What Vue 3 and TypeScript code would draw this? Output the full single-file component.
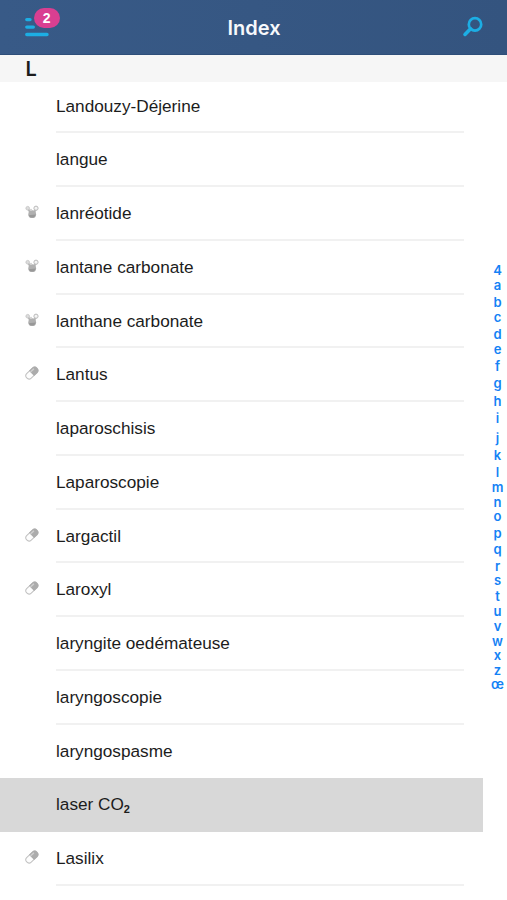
<script setup lang="ts">
type Kind = 'molecule' | 'pill' | null

interface Entry {
  label: string
  sub?: string
  kind: Kind
  selected?: boolean
}

const entries: Entry[] = [
  { label: 'Landouzy-Déjerine', kind: null },
  { label: 'langue', kind: null },
  { label: 'lanréotide', kind: 'molecule' },
  { label: 'lantane carbonate', kind: 'molecule' },
  { label: 'lanthane carbonate', kind: 'molecule' },
  { label: 'Lantus', kind: 'pill' },
  { label: 'laparoschisis', kind: null },
  { label: 'Laparoscopie', kind: null },
  { label: 'Largactil', kind: 'pill' },
  { label: 'Laroxyl', kind: 'pill' },
  { label: 'laryngite oedémateuse', kind: null },
  { label: 'laryngoscopie', kind: null },
  { label: 'laryngospasme', kind: null },
  { label: 'laser CO', sub: '2', kind: null, selected: true },
  { label: 'Lasilix', kind: 'pill' },
]

// Each letter of the side index with the distance to the next one.
const letters: [string, number][] = [
  ['4', 15], ['a', 17], ['b', 15], ['c', 17], ['d', 15], ['e', 17], ['f', 17],
  ['g', 18], ['h', 17], ['i', 20], ['j', 17], ['k', 17], ['l', 15.5], ['m', 14.5],
  ['n', 14.5], ['o', 16.5], ['p', 16.5], ['q', 16.5], ['r', 14.5], ['s', 16], ['t', 15],
  ['u', 15], ['v', 14.5], ['w', 14.5], ['x', 14.5], ['z', 14.5], ['œ', 15],
]
</script>

<template>
  <div class="screen">
    <header class="bar">
      <button class="menu" aria-label="Menu">
        <svg width="25" height="20" viewBox="0 0 25 20">
          <path d="M2.8 2.6H6M2.8 10.1H9.3M2.8 17.5H23" stroke="#1caee4" stroke-width="3.4" stroke-linecap="round" />
        </svg>
        <span class="badge">2</span>
      </button>
      <h1>Index</h1>
      <svg class="search" width="22" height="22" viewBox="0 0 22 22">
        <circle cx="13" cy="8.4" r="6.2" fill="none" stroke="#1caee4" stroke-width="2.7" />
        <path d="M8.6 12.8L3 18.4" stroke="#1caee4" stroke-width="3.6" stroke-linecap="round" />
      </svg>
    </header>
    <h2 class="section">L</h2>
    <main class="body">
      <ul class="list">
        <li v-for="e in entries" :key="e.label" class="row" :class="{ selected: e.selected }">
          <span class="icon">
            <svg v-if="e.kind === 'molecule'" width="14" height="14" viewBox="0 0 14 14">
              <path d="M3.2 4.2L5.6 7.6M10.8 4.5L8.8 7.6" stroke="#b8b8b8" stroke-width="2" />
              <circle cx="7.2" cy="9.2" r="3.9" fill="#b0b0b0" />
              <path d="M3.6 10.2a3.8 3.8 0 0 0 7.2-.6z" fill="#989898" />
              <circle cx="2.7" cy="3.2" r="1.8" fill="#dcdcdc" stroke="#c4c4c4" stroke-width=".8" />
              <circle cx="6" cy="4.8" r="1" fill="#d2d2d2" />
              <circle cx="11" cy="3.2" r="2.1" fill="#f4f4f4" stroke="#bababa" stroke-width="1" />
            </svg>
            <svg v-else-if="e.kind === 'pill'" width="16" height="16" viewBox="0 0 16 16">
              <g transform="rotate(-43 8 8)">
                <rect x=".8" y="4.8" width="14" height="6.4" rx="3.2" fill="#fdfdfd" stroke="#c0c0c0" stroke-width="1" />
                <path d="M7.4 4.3H11.6a3.7 3.7 0 0 1 0 7.4H7.4z" fill="#acacac" />
                <path d="M7.6 6.2H12.3" stroke="#cfcfcf" stroke-width="1.4" />
              </g>
            </svg>
          </span>
          <span class="label">{{ e.label }}<span v-if="e.sub" class="sub">{{ e.sub }}</span></span>
        </li>
      </ul>
      <nav class="letters">
        <span v-for="[l, step] in letters" :key="l" :style="{ height: step + 'px' }">{{ l }}</span>
      </nav>
    </main>
  </div>
</template>

<style>
body {
  margin: 0;
  background: #fff;
}
</style>

<style scoped>
.screen {
  height: 900px;
  overflow: hidden;
  display: flex;
  flex-direction: column;
  background: #fff;
  color: #1c1c1c;
  font-family: "Liberation Sans", Arial, sans-serif;
}
.bar {
  flex: none;
  box-sizing: border-box;
  height: 54.5px;
  padding: 0 23px 0 24px;
  display: grid;
  grid-template-columns: 1fr auto 1fr;
  align-items: center;
  background: linear-gradient(90deg, #385a87, #34547f);
  border-bottom: 1px solid #2e4e79;
}
.menu {
  position: relative;
  width: 25px;
  height: 20px;
  padding: 0;
  border: 0;
  background: none;
}
.menu svg {
  display: block;
}
.badge {
  position: absolute;
  left: 9.5px;
  top: -9px;
  width: 26.5px;
  height: 20px;
  border-radius: 10px;
  background: #d93f91;
  color: #fff;
  font: 700 14px/20px "Liberation Sans", Arial, sans-serif;
  text-align: center;
}
h1 {
  margin: 2px 0 0;
  color: #f7f9fc;
  font: 600 20px/26px Inter, sans-serif;
}
.search {
  justify-self: end;
}
.section {
  flex: none;
  position: relative;
  z-index: 1;
  box-sizing: border-box;
  height: 27px;
  margin: 0;
  padding: 1px 0 0 25.5px;
  background: #f6f6f6;
  font: 600 20px/26px Inter, sans-serif;
}
.body {
  display: flex;
  justify-content: space-between;
  margin-top: -1.9px;
}
.list {
  width: 482.5px;
  margin: 0;
  padding: 0;
  list-style: none;
}
.row {
  display: flex;
  height: 53.75px;
}
.icon {
  flex: none;
  box-sizing: border-box;
  width: 56px;
  height: 50px;
  padding-left: 7px;
  display: flex;
  align-items: center;
  justify-content: center;
}
.label {
  flex: none;
  box-sizing: border-box;
  width: 408px;
  border-bottom: 2px solid #f1f1f1;
  font-size: 17.2px;
  line-height: 53.5px;
  white-space: nowrap;
}
.sub {
  position: relative;
  top: 3px;
  font-size: 11px;
  font-weight: 700;
  line-height: 1;
}
.selected {
  background: #d8d8d8;
}
.selected .label,
.row:has(+ .selected) .label {
  border-color: transparent;
}
.letters {
  width: 19px;
  padding-top: 182px;
  display: flex;
  flex-direction: column;
  color: #1482f5;
  font: 600 13px/16px Inter, sans-serif;
  text-align: center;
}
.letters span {
  flex: none;
}
</style>
